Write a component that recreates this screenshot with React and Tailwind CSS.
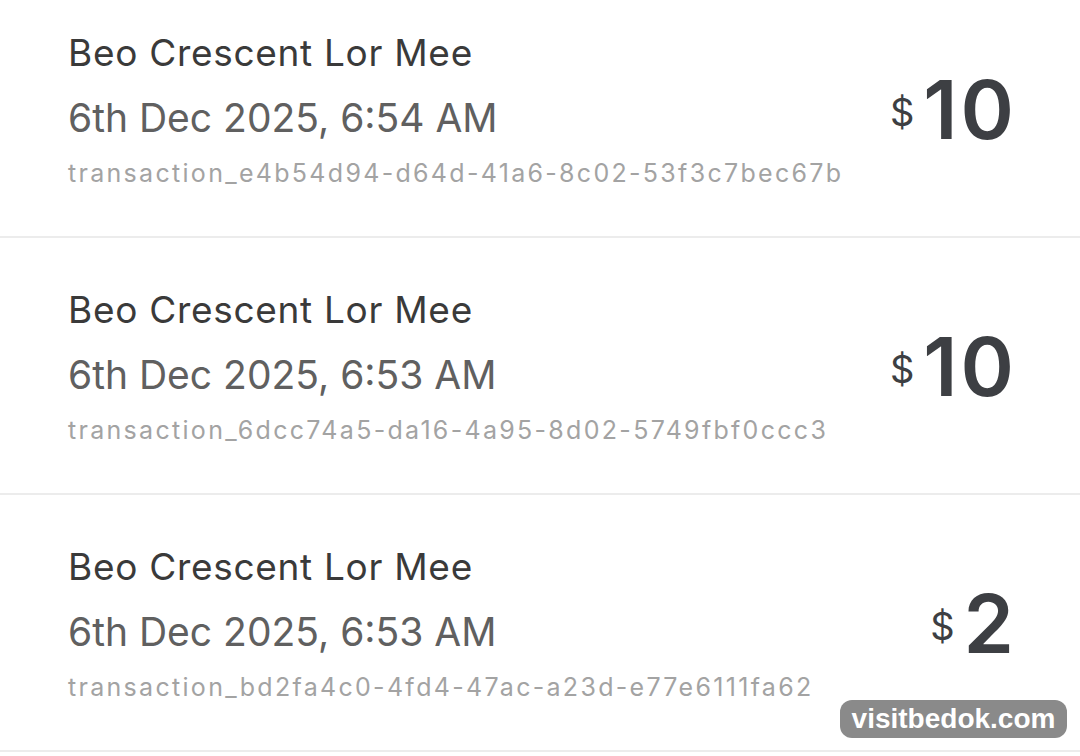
import React from "react";

const rows = [
  { name: "Beo Crescent Lor Mee", date: "6th Dec 2025, 6:54 AM", id: "transaction_e4b54d94-d64d-41a6-8c02-53f3c7bec67b", amount: "10" },
  { name: "Beo Crescent Lor Mee", date: "6th Dec 2025, 6:53 AM", id: "transaction_6dcc74a5-da16-4a95-8d02-5749fbf0ccc3", amount: "10" },
  { name: "Beo Crescent Lor Mee", date: "6th Dec 2025, 6:53 AM", id: "transaction_bd2fa4c0-4fd4-47ac-a23d-e77e6111fa62", amount: "2" },
];

function Row({ name, date, id, amount }) {
  return (
    <div className="flex items-center justify-between border-b-2 border-[#ececec] pl-[68px] pr-[63px] pt-[50px] pb-[48px]">
      <div className="flex flex-col">
        <div className="text-[37px] leading-[44px] tracking-[0.7px] text-[#3a3a3a]">{name}</div>
        <div className="mt-[20px] text-[39px] leading-[46px] text-[#606060]">{date}</div>
        <div className="mt-[17px] text-[25px] leading-[30px] tracking-[2.3px] text-[#a3a3a3]">{id}</div>
      </div>
      <div className="flex items-start text-[#3d3f43]">
        <span className="mt-[22px] mr-[9px] text-[38px] leading-[40px]">$</span>
        <span className="text-[81px] leading-[80px] font-semibold tracking-[3px]">{amount}</span>
      </div>
    </div>
  );
}

export default function App() {
  return (
    <div className="relative h-[756px] w-[1080px] overflow-hidden bg-white font-['Inter',sans-serif]">
      {/* list */}
      <div className="-mt-[19px]">
        {rows.map((r, i) => (
          <Row key={i} {...r} />
        ))}
      </div>

      {/* watermark */}
      <div className="absolute left-[840px] top-[700px] flex h-[38px] w-[227px] items-center justify-center rounded-[12px] bg-[#8a8a8a] font-['Liberation_Sans',Arial,sans-serif] text-[28px] font-bold text-white">
        visitbedok.com
      </div>
    </div>
  );
}
